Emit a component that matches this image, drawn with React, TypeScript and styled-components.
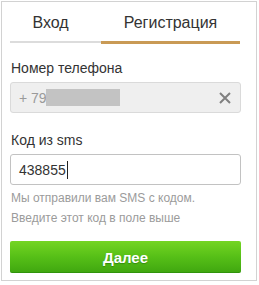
import React from "react";
import styled, { createGlobalStyle } from "styled-components";

const Global = createGlobalStyle`
  html, body { margin: 0; padding: 0; background: #fff; }
  body { font-family: "Liberation Sans", Arial, sans-serif; }
`;

const Card = styled.div`
  box-sizing: border-box;
  margin: 1px 0 0 1px;
  width: 256px;
  height: 280px;
  border: 1px solid #d2d2d2;
  padding: 0 15px 0 8px;
  display: flex;
  flex-direction: column;
`;

const Tabs = styled.div`
  display: flex;
  align-items: flex-start;
`;

const Tab = styled.div<{ $active?: boolean; $w: number; $shift?: number }>`
  box-sizing: border-box;
  width: ${(p) => p.$w}px;
  padding: 12px ${(p) => p.$shift ?? 0}px 9px 0;
  text-align: center;
  font-size: 16px;
  line-height: 18px;
  color: #333;
  border-bottom: ${(p) => (p.$active ? "3px solid #c99a55" : "2px solid #dcdcdc")};
`;

const Label = styled.div<{ $top: number }>`
  margin-top: ${(p) => p.$top}px;
  font-size: 14px;
  line-height: 16px;
  color: #333;
  padding-left: 1px;
`;

const Field = styled.div<{ $disabled?: boolean }>`
  box-sizing: border-box;
  margin-top: 6px;
  height: 31px;
  display: flex;
  align-items: center;
  padding: 0 9px 0 8px;
  border: 1px solid ${(p) => (p.$disabled ? "#dadada" : "#c2c2c2")};
  border-radius: 3px;
  background: ${(p) => (p.$disabled ? "#efefef" : "#fff")};
  font-size: 14px;
  color: ${(p) => (p.$disabled ? "#9a9a9a" : "#333")};
`;

const Value = styled.span`
  flex: 1;
  display: flex;
  align-items: center;
  white-space: pre;
`;

const Hidden = styled.span`
  display: inline-block;
  width: 74px;
  height: 17px;
  background: #c3c3c3;
  margin-left: -1px;
`;

const Caret = styled.span`
  display: inline-block;
  width: 1px;
  height: 18px;
  background: #222;
  margin-left: 1px;
`;

const Clear = styled.svg`
  width: 12px;
  height: 12px;
  flex: none;
`;

const Help = styled.div`
  margin-top: 4px;
  font-size: 12px;
  line-height: 19.5px;
  color: #9b9b9b;
  padding-left: 1px;
`;

const Button = styled.button`
  box-sizing: border-box;
  margin-top: 13px;
  height: 32px;
  width: 100%;
  border: none;
  border-radius: 2px;
  background: linear-gradient(to bottom, #74d523 0%, #56bf17 50%, #3fa60f 100%);
  box-shadow: inset 0 -1px 0 rgba(0, 90, 0, 0.25);
  color: #fff;
  font-family: "Liberation Sans", Arial, sans-serif;
  font-size: 15px;
  font-weight: bold;
  text-shadow: 0 1px 1px rgba(0, 70, 0, 0.35);
  padding: 0;
`;

export default function App() {
  return (
    <>
      <Global />
      <Card>
        <Tabs>
          <Tab $w={91} $shift={10}>Вход</Tab>
          <Tab $w={139} $active>Регистрация</Tab>
        </Tabs>
        <Label $top={16}>Номер телефона</Label>
        <Field $disabled>
          <Value>
            + 79<Hidden />
          </Value>
          <Clear viewBox="0 0 12 12">
            <path d="M1 1 L11 11 M11 1 L1 11" stroke="#808080" strokeWidth="2" />
          </Clear>
        </Field>
        <Label $top={19}>Код из sms</Label>
        <Field>
          <Value>
            438855<Caret />
          </Value>
        </Field>
        <Help>
          Мы отправили вам SMS с кодом.
          <br />
          Введите этот код в поле выше
        </Help>
        <Button>Далее</Button>
      </Card>
    </>
  );
}
